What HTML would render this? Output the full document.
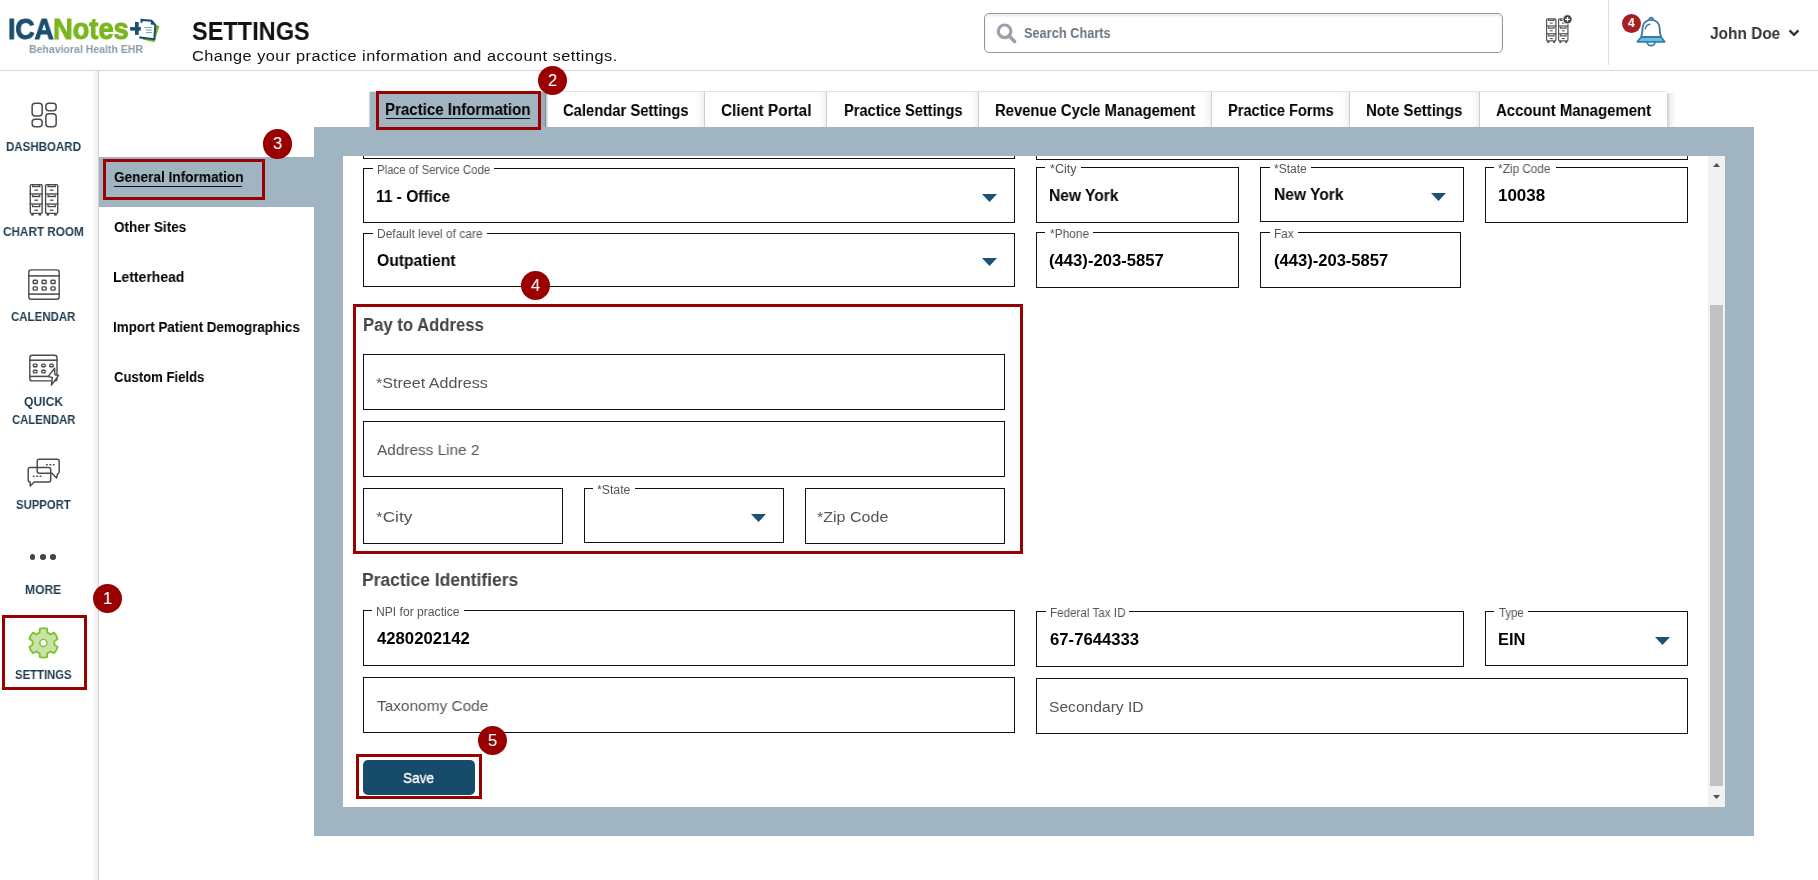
<!DOCTYPE html>
<html><head><meta charset="utf-8"><title>Settings</title>
<style>

html,body{margin:0;padding:0;}
body{width:1818px;height:880px;overflow:hidden;background:#fff;position:relative;font-family:"Liberation Sans",sans-serif;}
.t{position:absolute;white-space:nowrap;transform-origin:0 0;will-change:transform;}
.badge{position:absolute;border-radius:50%;background:#990000;color:#fff;text-align:center;font-size:16.5px;font-family:"Liberation Sans",sans-serif;}
.tab{position:absolute;top:92px;height:35px;box-shadow:inset -1.5px 0 0 rgba(0,0,0,0.28), inset -9px 0 8px -6px rgba(0,0,0,0.10);}

</style></head><body>
<div style="position:absolute;left:0px;top:70px;width:1818px;height:1px;background:#d6d6d6;"></div>
<div style="position:absolute;left:984px;top:13px;width:519px;height:40px;box-sizing:border-box;border:1px solid #8e98a0;border-radius:5px;box-shadow:inset 0 2px 3px rgba(0,0,0,0.08);"></div>
<svg style="position:absolute;left:995px;top:22px" width="24" height="24"><circle cx="9.6" cy="9.3" r="6.3" fill="none" stroke="#99a2aa" stroke-width="3.2"/><line x1="14.2" y1="14" x2="19.6" y2="19.5" stroke="#99a2aa" stroke-width="3.6" stroke-linecap="round"/></svg>
<div style="position:absolute;left:1608px;top:0px;width:1px;height:65px;background:#dedede;"></div>
<svg style="position:absolute;left:1540px;top:10px" width="40" height="40"><rect x="6.6" y="8.799999999999999" width="9.3" height="22.1" rx="1" fill="#fff" stroke="#555" stroke-width="1.2"/><line x1="6" y1="15.97" x2="16.5" y2="15.97" stroke="#555" stroke-width="1.2"/><line x1="6" y1="23.73" x2="16.5" y2="23.73" stroke="#555" stroke-width="1.2"/><path d="M8.52,8.80 v1.49 h5.46 v-1.49" fill="none" stroke="#555" stroke-width="1.2"/><line x1="9.78" y1="13.02" x2="12.72" y2="13.02" stroke="#555" stroke-width="1.08"/><path d="M8.52,16.57 v1.49 h5.46 v-1.49" fill="none" stroke="#555" stroke-width="1.2"/><line x1="9.78" y1="20.78" x2="12.72" y2="20.78" stroke="#555" stroke-width="1.08"/><path d="M8.52,24.33 v1.49 h5.46 v-1.49" fill="none" stroke="#555" stroke-width="1.2"/><line x1="9.78" y1="28.55" x2="12.72" y2="28.55" stroke="#555" stroke-width="1.08"/><rect x="7.26" y="31.00" width="2.10" height="2" fill="#555"/><rect x="13.14" y="31.00" width="2.10" height="2" fill="#555"/><rect x="18.6" y="8.799999999999999" width="9.3" height="22.1" rx="1" fill="#fff" stroke="#555" stroke-width="1.2"/><line x1="18" y1="15.97" x2="28.5" y2="15.97" stroke="#555" stroke-width="1.2"/><line x1="18" y1="23.73" x2="28.5" y2="23.73" stroke="#555" stroke-width="1.2"/><path d="M20.52,8.80 v1.49 h5.46 v-1.49" fill="none" stroke="#555" stroke-width="1.2"/><line x1="21.78" y1="13.02" x2="24.72" y2="13.02" stroke="#555" stroke-width="1.08"/><path d="M20.52,16.57 v1.49 h5.46 v-1.49" fill="none" stroke="#555" stroke-width="1.2"/><line x1="21.78" y1="20.78" x2="24.72" y2="20.78" stroke="#555" stroke-width="1.08"/><path d="M20.52,24.33 v1.49 h5.46 v-1.49" fill="none" stroke="#555" stroke-width="1.2"/><line x1="21.78" y1="28.55" x2="24.72" y2="28.55" stroke="#555" stroke-width="1.08"/><rect x="19.26" y="31.00" width="2.10" height="2" fill="#555"/><rect x="25.14" y="31.00" width="2.10" height="2" fill="#555"/><circle cx="27.5" cy="9.3" r="4.6" fill="#444" stroke="#fff" stroke-width="0.8"/><path d="M25.2,9.3 h4.6 M27.5,7 v4.6" stroke="#fff" stroke-width="1.3"/></svg>
<svg style="position:absolute;left:1634px;top:15px" width="34" height="34"><path d="M15.2,4.6 a1.9,1.9 0 0 1 3.8,0" fill="none" stroke="#3d7ba6" stroke-width="1.8"/><path d="M13.2,27 a3.9,3.6 0 0 0 7.8,0" fill="none" stroke="#3d7ba6" stroke-width="1.8"/><path d="M7.2,22 C8,19 8.6,15.5 8.6,12.8 C8.6,8.2 12.4,4.9 17.1,4.9 C21.8,4.9 25.6,8.2 25.6,12.8 C25.6,15.5 26.2,19 27,22 Z" fill="#fff" stroke="#3d7ba6" stroke-width="1.9" stroke-linejoin="round"/><path d="M7,22.2 L27.2,22.2 L30.6,26.8 L3.4,26.8 Z" fill="#5ec2ec" stroke="#3d7ba6" stroke-width="1.8" stroke-linejoin="round"/><path d="M11.3,14 C11.7,11.3 13.3,9.7 15.8,9.3" fill="none" stroke="#3d7ba6" stroke-width="1.4" stroke-linecap="round"/></svg>
<div class="badge" style="left:1621.8px;top:14px;width:19px;height:19px;line-height:19px;font-size:12px;font-weight:700;background:#a51e22;">4</div>
<svg style="position:absolute;left:1786px;top:26px" width="16" height="14"><path d="M3.6,4.3 L8,8.8 L12.4,4.3" fill="none" stroke="#333" stroke-width="2.4"/></svg>
<svg style="position:absolute;left:125px;top:12px" width="40" height="36"><rect x="5.1" y="15.1" width="12.9" height="3.5" fill="#1b4f6f"/><rect x="10" y="10" width="3.7" height="12.9" fill="#1b4f6f"/><polygon points="31.1,13.1 34.4,14.1 29.4,30.3 17.6,27.4" fill="#7ab52b"/><polygon points="16.4,7.9 26.6,8.8 30.3,13 29.3,27.2 15.3,25.6" fill="#fff"/><path d="M16.6,10.8 L16.4,7.9 L26.6,8.8 L30.3,13 L29.3,27.2 L15.3,25.6 L15.4,24.3" fill="none" stroke="#1b4f6f" stroke-width="2" stroke-linejoin="miter"/><polygon points="25.8,8.6 30.5,13 25.8,12.5" fill="#1b4f6f"/><path d="M19.6,15.5 H26.8 M21,18 H26.8 M21,20.6 H26.8" stroke="#7f96ad" stroke-width="1"/></svg>
<div style="position:absolute;left:92px;top:71px;width:6px;height:809px;background:linear-gradient(to right,rgba(0,0,0,0),rgba(0,0,0,0.07));"></div>
<div style="position:absolute;left:98px;top:71px;width:1px;height:809px;background:#cfcfcf;"></div>
<svg style="position:absolute;left:28px;top:99px" width="32" height="32" fill="none" stroke="#4a4a4a" stroke-width="1.5"><rect x="4.15" y="4.15" width="10.0" height="12.9" rx="3"/><rect x="17.85" y="4.15" width="10.3" height="7.6" rx="3"/><rect x="4.15" y="20.25" width="10.0" height="7.6" rx="3"/><rect x="17.85" y="14.85" width="10.3" height="13.0" rx="3"/></svg>
<svg style="position:absolute;left:26px;top:180px" width="36" height="40"><rect x="4.3" y="4.6" width="11.799999999999999" height="28.8" rx="1" fill="#fff" stroke="#4a4a4a" stroke-width="1.4"/><line x1="3.6" y1="13.97" x2="16.8" y2="13.97" stroke="#4a4a4a" stroke-width="1.4"/><line x1="3.6" y1="24.03" x2="16.8" y2="24.03" stroke="#4a4a4a" stroke-width="1.4"/><path d="M6.77,4.60 v1.90 h6.86 v-1.90" fill="none" stroke="#4a4a4a" stroke-width="1.4"/><line x1="8.35" y1="10.14" x2="12.05" y2="10.14" stroke="#4a4a4a" stroke-width="1.26"/><path d="M6.77,14.67 v1.90 h6.86 v-1.90" fill="none" stroke="#4a4a4a" stroke-width="1.4"/><line x1="8.35" y1="20.21" x2="12.05" y2="20.21" stroke="#4a4a4a" stroke-width="1.26"/><path d="M6.77,24.73 v1.90 h6.86 v-1.90" fill="none" stroke="#4a4a4a" stroke-width="1.4"/><line x1="8.35" y1="30.27" x2="12.05" y2="30.27" stroke="#4a4a4a" stroke-width="1.26"/><rect x="5.18" y="33.60" width="2.64" height="2" fill="#4a4a4a"/><rect x="12.58" y="33.60" width="2.64" height="2" fill="#4a4a4a"/><rect x="19.599999999999998" y="4.6" width="12.1" height="28.8" rx="1" fill="#fff" stroke="#4a4a4a" stroke-width="1.4"/><line x1="18.9" y1="13.97" x2="32.4" y2="13.97" stroke="#4a4a4a" stroke-width="1.4"/><line x1="18.9" y1="24.03" x2="32.4" y2="24.03" stroke="#4a4a4a" stroke-width="1.4"/><path d="M22.14,4.60 v1.90 h7.02 v-1.90" fill="none" stroke="#4a4a4a" stroke-width="1.4"/><line x1="23.76" y1="10.14" x2="27.54" y2="10.14" stroke="#4a4a4a" stroke-width="1.26"/><path d="M22.14,14.67 v1.90 h7.02 v-1.90" fill="none" stroke="#4a4a4a" stroke-width="1.4"/><line x1="23.76" y1="20.21" x2="27.54" y2="20.21" stroke="#4a4a4a" stroke-width="1.26"/><path d="M22.14,24.73 v1.90 h7.02 v-1.90" fill="none" stroke="#4a4a4a" stroke-width="1.4"/><line x1="23.76" y1="30.27" x2="27.54" y2="30.27" stroke="#4a4a4a" stroke-width="1.26"/><rect x="20.52" y="33.60" width="2.70" height="2" fill="#4a4a4a"/><rect x="28.08" y="33.60" width="2.70" height="2" fill="#4a4a4a"/></svg>
<svg style="position:absolute;left:26px;top:266px" width="36" height="36"><rect x="2.8" y="3.9000000000000004" width="30.400000000000002" height="29.3" rx="2.5" fill="#fff" stroke="#4a4a4a" stroke-width="1.4"/><line x1="2.1" y1="9.899999999999977" x2="33.9" y2="9.899999999999977" stroke="#4a4a4a" stroke-width="1.54"/><line x1="2.1" y1="28.100000000000023" x2="33.9" y2="28.100000000000023" stroke="#4a4a4a" stroke-width="1.54"/><rect x="7.2" y="14.300000000000022" width="4.1" height="3.199999999999966" rx="0.8" fill="none" stroke="#4a4a4a" stroke-width="1.4"/><rect x="16.099999999999998" y="14.300000000000022" width="4.1" height="3.199999999999966" rx="0.8" fill="none" stroke="#4a4a4a" stroke-width="1.4"/><rect x="24.999999999999996" y="14.300000000000022" width="4.1" height="3.199999999999966" rx="0.8" fill="none" stroke="#4a4a4a" stroke-width="1.4"/><rect x="7.2" y="20.899999999999988" width="4.1" height="3.200000000000023" rx="0.8" fill="none" stroke="#4a4a4a" stroke-width="1.4"/><rect x="16.099999999999998" y="20.899999999999988" width="4.1" height="3.200000000000023" rx="0.8" fill="none" stroke="#4a4a4a" stroke-width="1.4"/><rect x="24.999999999999996" y="20.899999999999988" width="4.1" height="3.200000000000023" rx="0.8" fill="none" stroke="#4a4a4a" stroke-width="1.4"/></svg>
<svg style="position:absolute;left:26px;top:350px" width="36" height="40"><rect x="3.8" y="5.2" width="27.200000000000003" height="25.700000000000003" rx="2.5" fill="#fff" stroke="#4a4a4a" stroke-width="1.4"/><line x1="3.1" y1="10.2" x2="31.700000000000003" y2="10.2" stroke="#4a4a4a" stroke-width="1.54"/><line x1="3.1" y1="26.4" x2="31.700000000000003" y2="26.4" stroke="#4a4a4a" stroke-width="1.54"/><rect x="7.400000000000003" y="14.099999999999977" width="3.6" height="2.700000000000023" rx="0.8" fill="none" stroke="#4a4a4a" stroke-width="1.4"/><rect x="15.8" y="14.099999999999977" width="3.3999999999999972" height="2.700000000000023" rx="0.8" fill="none" stroke="#4a4a4a" stroke-width="1.4"/><rect x="23.8" y="14.099999999999977" width="3.3999999999999972" height="2.700000000000023" rx="0.8" fill="none" stroke="#4a4a4a" stroke-width="1.4"/><rect x="7.400000000000003" y="20.2" width="3.6" height="2.700000000000023" rx="0.8" fill="none" stroke="#4a4a4a" stroke-width="1.4"/><rect x="15.8" y="20.2" width="3.3999999999999972" height="2.700000000000023" rx="0.8" fill="none" stroke="#4a4a4a" stroke-width="1.4"/><polygon points="28.6,18.2 22.2,26.6 26.4,27.4 25.4,35.2 32.6,25.4 28.9,24.7" fill="#fff" stroke="#4a4a4a" stroke-width="1.4" stroke-linejoin="round"/></svg>
<svg style="position:absolute;left:24px;top:455px" width="40" height="36" fill="none" stroke="#4a4a4a" stroke-width="1.45" stroke-linejoin="round"><path d="M15.2,4.2 H33.2 a2,2 0 0 1 2,2 V17 a2,2 0 0 1 -1.5,1.8 L32.5,23 L28,18.3 H15.2 a2,2 0 0 1 -2,-2 V6.2 a2,2 0 0 1 2,-2 Z"/><path d="M6.2,12.5 H24.7 a2,2 0 0 1 2,2 V25 a2,2 0 0 1 -2,2 H10.2 L6.2,31 V27 a2,2 0 0 1 -2,-2 V14.5 a2,2 0 0 1 2,-2 Z"/><path d="M22.6,9.8 h0.6 M26,9.8 h0.6 M29.4,9.8 h0.6" stroke-width="1.6" stroke-linecap="round"/><path d="M9.4,21.3 h0.6 M12.8,21.3 h0.6 M16.2,21.3 h0.6" stroke-width="1.6" stroke-linecap="round"/></svg>
<div style="position:absolute;left:29.90px;top:554.10px;width:5.6px;height:5.6px;border-radius:50%;background:#444;"></div>
<div style="position:absolute;left:40.30px;top:554.10px;width:5.6px;height:5.6px;border-radius:50%;background:#444;"></div>
<div style="position:absolute;left:50.30px;top:554.10px;width:5.6px;height:5.6px;border-radius:50%;background:#444;"></div>
<svg style="position:absolute;left:25px;top:625px" width="38" height="38"><path d="M14.56,7.63 L14.94,3.64 A14.7,14.7 0 0 1 22.06,3.64 L22.44,7.63 A11.0,11.0 0 0 1 25.42,9.35 L29.07,7.69 A14.7,14.7 0 0 1 32.63,13.85 L29.36,16.18 A11.0,11.0 0 0 1 29.36,19.62 L32.63,21.95 A14.7,14.7 0 0 1 29.07,28.11 L25.42,26.45 A11.0,11.0 0 0 1 22.44,28.17 L22.06,32.16 A14.7,14.7 0 0 1 14.94,32.16 L14.56,28.17 A11.0,11.0 0 0 1 11.58,26.45 L7.93,28.11 A14.7,14.7 0 0 1 4.37,21.95 L7.64,19.62 A11.0,11.0 0 0 1 7.64,16.18 L4.37,13.85 A14.7,14.7 0 0 1 7.93,7.69 L11.58,9.35 A11.0,11.0 0 0 1 14.56,7.63 Z" fill="#c9e3a6" stroke="#7cc22b" stroke-width="1.8" stroke-linejoin="round"/><circle cx="18.4" cy="17.9" r="3.6" fill="#fff" stroke="#79bf2a" stroke-width="1.3"/></svg>
<div style="position:absolute;left:2px;top:615px;width:85px;height:75px;box-sizing:border-box;border:3px solid #990000;"></div>
<div class="badge" style="left:92.85px;top:583.75px;width:29.5px;height:29.5px;line-height:29.5px;">1</div>
<div style="position:absolute;left:99px;top:157px;width:215px;height:50px;background:#a0b4c1;"></div>
<div style="position:absolute;left:103px;top:159px;width:162px;height:41px;box-sizing:border-box;border:3px solid #990000;"></div>
<div style="position:absolute;left:114.2px;top:186px;width:128.1px;height:1.2px;background:#111;"></div>
<div class="badge" style="left:262.75px;top:129.45px;width:29.5px;height:29.5px;line-height:29.5px;">3</div>
<div style="position:absolute;left:314px;top:127px;width:1440px;height:709px;background:#a0b4c1;"></div>
<div style="position:absolute;left:370px;top:91px;width:1297px;height:1px;background:#e2e2e2;"></div>
<div class="tab" style="left:370px;width:176.6px;background:#a0b4c1;"></div>
<div class="tab" style="left:546px;width:159.6px;background:#fff;"></div>
<div class="tab" style="left:705px;width:122.6px;background:#fff;"></div>
<div class="tab" style="left:827px;width:152.6px;background:#fff;"></div>
<div class="tab" style="left:979px;width:233.6px;background:#fff;"></div>
<div class="tab" style="left:1212px;width:138.6px;background:#fff;"></div>
<div class="tab" style="left:1350px;width:130.6px;background:#fff;"></div>
<div class="tab" style="left:1480px;width:187.6px;background:#fff;box-shadow:none;"></div>
<div style="position:absolute;left:386px;top:118px;width:144px;height:1.2px;background:#111;"></div>
<div style="position:absolute;left:1667px;top:93px;width:9px;height:34px;background:linear-gradient(to right,rgba(0,0,0,0.2),rgba(0,0,0,0.06) 40%,rgba(0,0,0,0));"></div>
<div style="position:absolute;left:368px;top:92px;width:2px;height:35px;background:linear-gradient(to left,rgba(0,0,0,0.18),rgba(0,0,0,0));"></div>
<div style="position:absolute;left:546px;top:92px;width:2px;height:35px;background:linear-gradient(to right,rgba(0,0,0,0.25),rgba(0,0,0,0.05));"></div>
<div style="position:absolute;left:376px;top:91px;width:165px;height:39px;box-sizing:border-box;border:3px solid #990000;"></div>
<div class="badge" style="left:537.95px;top:65.65px;width:29.5px;height:29.5px;line-height:29.5px;">2</div>
<div style="position:absolute;left:343px;top:156px;width:1382px;height:651px;background:#fff;"></div>
<div style="position:absolute;left:1708px;top:156px;width:17px;height:651px;background:#f1f1f1;"></div>
<div style="position:absolute;left:1710px;top:305px;width:13px;height:481px;background:#c1c1c1;"></div>
<svg style="position:absolute;left:1713px;top:163px" width="7" height="4"><polygon points="0,4 7,4 3.5,0" fill="#505050"/></svg>
<svg style="position:absolute;left:1713px;top:795px" width="7" height="4"><polygon points="0,0 7,0 3.5,4" fill="#505050"/></svg>
<div style="position:absolute;left:363px;top:156px;width:652px;height:3px;box-sizing:border-box;border:1px solid #111;border-top:none;"></div>
<div style="position:absolute;left:1036px;top:156px;width:652px;height:4px;box-sizing:border-box;border:1px solid #111;border-top:none;"></div>
<div style="position:absolute;left:363px;top:168px;width:652px;height:55px;box-sizing:border-box;border:1px solid #111;background:#fff;"></div>
<div style="position:absolute;left:372.5px;top:167px;width:121.60000000000002px;height:4px;background:#fff;"></div>
<div style="position:absolute;left:1036px;top:167px;width:203px;height:56px;box-sizing:border-box;border:1px solid #111;background:#fff;"></div>
<div style="position:absolute;left:1045.2px;top:166px;width:36.0px;height:4px;background:#fff;"></div>
<div style="position:absolute;left:1260px;top:167px;width:204px;height:55px;box-sizing:border-box;border:1px solid #111;background:#fff;"></div>
<div style="position:absolute;left:1269.6px;top:166px;width:41.700000000000045px;height:4px;background:#fff;"></div>
<div style="position:absolute;left:1485px;top:167px;width:203px;height:56px;box-sizing:border-box;border:1px solid #111;background:#fff;"></div>
<div style="position:absolute;left:1494px;top:166px;width:61.5px;height:4px;background:#fff;"></div>
<div style="position:absolute;left:363px;top:233px;width:652px;height:54px;box-sizing:border-box;border:1px solid #111;background:#fff;"></div>
<div style="position:absolute;left:372.5px;top:232px;width:114.0px;height:4px;background:#fff;"></div>
<div style="position:absolute;left:1036px;top:232px;width:203px;height:56px;box-sizing:border-box;border:1px solid #111;background:#fff;"></div>
<div style="position:absolute;left:1045.2px;top:231px;width:47.799999999999955px;height:4px;background:#fff;"></div>
<div style="position:absolute;left:1260px;top:232px;width:201px;height:56px;box-sizing:border-box;border:1px solid #111;background:#fff;"></div>
<div style="position:absolute;left:1269.6px;top:231px;width:28.40000000000009px;height:4px;background:#fff;"></div>
<svg style="position:absolute;left:982px;top:194px" width="15" height="8"><polygon points="0,0 15,0 7.5,8" fill="#1d5273"/></svg>
<svg style="position:absolute;left:982px;top:258px" width="15" height="8"><polygon points="0,0 15,0 7.5,8" fill="#1d5273"/></svg>
<svg style="position:absolute;left:1431px;top:193px" width="15" height="8"><polygon points="0,0 15,0 7.5,8" fill="#1d5273"/></svg>
<div style="position:absolute;left:353px;top:304px;width:670px;height:250px;box-sizing:border-box;border:3px solid #990000;"></div>
<div style="position:absolute;left:363px;top:354px;width:642px;height:56px;box-sizing:border-box;border:1px solid #111;background:#fff;"></div>
<div style="position:absolute;left:363px;top:421px;width:642px;height:56px;box-sizing:border-box;border:1px solid #111;background:#fff;"></div>
<div style="position:absolute;left:363px;top:488px;width:200px;height:56px;box-sizing:border-box;border:1px solid #111;background:#fff;"></div>
<div style="position:absolute;left:584px;top:488px;width:200px;height:55px;box-sizing:border-box;border:1px solid #111;background:#fff;"></div>
<div style="position:absolute;left:592.6px;top:487px;width:42.19999999999993px;height:4px;background:#fff;"></div>
<div style="position:absolute;left:805px;top:488px;width:200px;height:56px;box-sizing:border-box;border:1px solid #111;background:#fff;"></div>
<svg style="position:absolute;left:751px;top:514px" width="15" height="8"><polygon points="0,0 15,0 7.5,8" fill="#1d5273"/></svg>
<div style="position:absolute;left:363px;top:610px;width:652px;height:56px;box-sizing:border-box;border:1px solid #111;background:#fff;"></div>
<div style="position:absolute;left:372.4px;top:609px;width:91.80000000000001px;height:4px;background:#fff;"></div>
<div style="position:absolute;left:1036px;top:611px;width:428px;height:56px;box-sizing:border-box;border:1px solid #111;background:#fff;"></div>
<div style="position:absolute;left:1045.6px;top:610px;width:83.70000000000005px;height:4px;background:#fff;"></div>
<div style="position:absolute;left:1485px;top:611px;width:203px;height:55px;box-sizing:border-box;border:1px solid #111;background:#fff;"></div>
<div style="position:absolute;left:1494.4px;top:610px;width:33.899999999999864px;height:4px;background:#fff;"></div>
<svg style="position:absolute;left:1655px;top:637px" width="15" height="8"><polygon points="0,0 15,0 7.5,8" fill="#1d5273"/></svg>
<div style="position:absolute;left:363px;top:677px;width:652px;height:56px;box-sizing:border-box;border:1px solid #111;background:#fff;"></div>
<div style="position:absolute;left:1036px;top:678px;width:652px;height:56px;box-sizing:border-box;border:1px solid #111;background:#fff;"></div>
<div class="badge" style="left:520.75px;top:270.75px;width:29.5px;height:29.5px;line-height:29.5px;">4</div>
<div style="position:absolute;left:356px;top:754px;width:126px;height:45px;box-sizing:border-box;border:3px solid #990000;"></div>
<div style="position:absolute;left:363px;top:760px;width:112px;height:35px;border-radius:5px;background:#164b69;"></div>
<div class="badge" style="left:477.75px;top:725.65px;width:29.5px;height:29.5px;line-height:29.5px;">5</div>
<div class="t" style="left:192.32px;top:19.40px;font-size:25px;line-height:25px;font-weight:700;color:#111;transform:scaleX(0.9414);">SETTINGS</div>
<div class="t" style="left:192.40px;top:47.69px;font-size:15.4px;line-height:15.4px;font-weight:400;color:#111;transform:scaleX(1.0600);letter-spacing:0.468px;">Change your practice information and account settings.</div>
<div class="t" style="left:1024.07px;top:26.00px;font-size:14.4px;line-height:14.4px;font-weight:700;color:#6b7680;transform:scaleX(0.8880);">Search Charts</div>
<div class="t" style="left:1709.91px;top:25.00px;font-size:16.3px;line-height:16.3px;font-weight:700;color:#333;transform:scaleX(0.9471);">John Doe</div>
<div class="t" style="left:7.90px;top:14.00px;font-size:29.5px;line-height:29.5px;font-weight:700;color:#1b4f6f;transform:scaleX(0.8996);-webkit-text-stroke:1px #1b4f6f;">ICA</div>
<div class="t" style="left:53.00px;top:14.00px;font-size:29.5px;line-height:29.5px;font-weight:700;color:#7ab51d;transform:scaleX(0.9236);-webkit-text-stroke:1px #7ab51d;">Notes</div>
<div class="t" style="left:28.50px;top:44.04px;font-size:11px;line-height:11px;font-weight:700;color:#8d9ba6;transform:scaleX(0.9565);">Behavioral Health EHR</div>
<div class="t" style="left:6.00px;top:140.82px;font-size:12.2px;line-height:12.2px;font-weight:700;color:#1e3c50;transform:scaleX(0.9464);">DASHBOARD</div>
<div class="t" style="left:3.15px;top:226.02px;font-size:12.2px;line-height:12.2px;font-weight:700;color:#1e3c50;transform:scaleX(0.9627);">CHART ROOM</div>
<div class="t" style="left:11.25px;top:311.02px;font-size:12.2px;line-height:12.2px;font-weight:700;color:#1e3c50;transform:scaleX(0.9425);">CALENDAR</div>
<div class="t" style="left:24.04px;top:395.82px;font-size:12.2px;line-height:12.2px;font-weight:700;color:#1e3c50;transform:scaleX(0.9925);">QUICK</div>
<div class="t" style="left:11.95px;top:413.72px;font-size:12.2px;line-height:12.2px;font-weight:700;color:#1e3c50;transform:scaleX(0.9278);">CALENDAR</div>
<div class="t" style="left:15.58px;top:499.02px;font-size:12.2px;line-height:12.2px;font-weight:700;color:#1e3c50;transform:scaleX(0.9273);">SUPPORT</div>
<div class="t" style="left:25.40px;top:584.02px;font-size:12.2px;line-height:12.2px;font-weight:700;color:#1e3c50;transform:scaleX(0.9852);">MORE</div>
<div class="t" style="left:14.98px;top:669.12px;font-size:12.2px;line-height:12.2px;font-weight:700;color:#1e3c50;transform:scaleX(0.9282);">SETTINGS</div>
<div class="t" style="left:113.53px;top:170.20px;font-size:14.5px;line-height:14.5px;font-weight:700;color:#000;transform:scaleX(0.9399);">General Information</div>
<div class="t" style="left:113.53px;top:219.90px;font-size:14.5px;line-height:14.5px;font-weight:700;color:#000;transform:scaleX(0.9345);">Other Sites</div>
<div class="t" style="left:113.20px;top:270.00px;font-size:14.5px;line-height:14.5px;font-weight:700;color:#000;transform:scaleX(0.9623);">Letterhead</div>
<div class="t" style="left:113.20px;top:320.10px;font-size:14.5px;line-height:14.5px;font-weight:700;color:#000;transform:scaleX(0.9237);">Import Patient Demographics</div>
<div class="t" style="left:113.53px;top:369.80px;font-size:14.5px;line-height:14.5px;font-weight:700;color:#000;transform:scaleX(0.9047);">Custom Fields</div>
<div class="t" style="left:385.47px;top:102.20px;font-size:16.8px;line-height:16.8px;font-weight:700;color:#000;transform:scaleX(0.8967);">Practice Information</div>
<div class="t" style="left:563.00px;top:103.10px;font-size:16.8px;line-height:16.8px;font-weight:700;color:#000;transform:scaleX(0.8807);">Calendar Settings</div>
<div class="t" style="left:721.00px;top:103.10px;font-size:16.8px;line-height:16.8px;font-weight:700;color:#000;transform:scaleX(0.9151);">Client Portal</div>
<div class="t" style="left:843.88px;top:103.10px;font-size:16.8px;line-height:16.8px;font-weight:700;color:#000;transform:scaleX(0.8709);">Practice Settings</div>
<div class="t" style="left:994.88px;top:103.10px;font-size:16.8px;line-height:16.8px;font-weight:700;color:#000;transform:scaleX(0.8837);">Revenue Cycle Management</div>
<div class="t" style="left:1227.88px;top:103.10px;font-size:16.8px;line-height:16.8px;font-weight:700;color:#000;transform:scaleX(0.8711);">Practice Forms</div>
<div class="t" style="left:1366.37px;top:103.10px;font-size:16.8px;line-height:16.8px;font-weight:700;color:#000;transform:scaleX(0.8920);">Note Settings</div>
<div class="t" style="left:1495.90px;top:103.10px;font-size:16.8px;line-height:16.8px;font-weight:700;color:#000;transform:scaleX(0.8894);">Account Management</div>
<div class="t" style="left:376.50px;top:164.10px;font-size:12px;line-height:12px;font-weight:400;color:#555;transform:scaleX(0.9537);">Place of Service Code</div>
<div class="t" style="left:376.50px;top:228.00px;font-size:12px;line-height:12px;font-weight:400;color:#555;transform:scaleX(0.9947);">Default level of care</div>
<div class="t" style="left:1049.64px;top:163.10px;font-size:12px;line-height:12px;font-weight:400;color:#555;transform:scaleX(1.0527);">*City</div>
<div class="t" style="left:1274.03px;top:163.10px;font-size:12px;line-height:12px;font-weight:400;color:#555;transform:scaleX(1.0035);">*State</div>
<div class="t" style="left:1498.43px;top:163.10px;font-size:12px;line-height:12px;font-weight:400;color:#555;transform:scaleX(0.9833);">*Zip Code</div>
<div class="t" style="left:1049.63px;top:227.80px;font-size:12px;line-height:12px;font-weight:400;color:#555;transform:scaleX(0.9920);">*Phone</div>
<div class="t" style="left:1273.60px;top:227.80px;font-size:12px;line-height:12px;font-weight:400;color:#555;transform:scaleX(0.9817);">Fax</div>
<div class="t" style="left:597.03px;top:484.20px;font-size:12px;line-height:12px;font-weight:400;color:#555;transform:scaleX(1.0225);">*State</div>
<div class="t" style="left:376.40px;top:606.00px;font-size:12px;line-height:12px;font-weight:400;color:#555;transform:scaleX(1.0098);">NPI for practice</div>
<div class="t" style="left:1049.60px;top:607.00px;font-size:12px;line-height:12px;font-weight:400;color:#555;transform:scaleX(0.9697);">Federal Tax ID</div>
<div class="t" style="left:1499.12px;top:607.20px;font-size:12px;line-height:12px;font-weight:400;color:#555;transform:scaleX(0.9491);">Type</div>
<div class="t" style="left:376.48px;top:189.00px;font-size:16px;line-height:16px;font-weight:700;color:#000;transform:scaleX(0.9690);">11 - Office</div>
<div class="t" style="left:376.50px;top:252.90px;font-size:16px;line-height:16px;font-weight:700;color:#000;transform:scaleX(0.9807);">Outpatient</div>
<div class="t" style="left:1049.11px;top:188.40px;font-size:16px;line-height:16px;font-weight:700;color:#000;transform:scaleX(0.9732);">New York</div>
<div class="t" style="left:1273.51px;top:187.40px;font-size:16px;line-height:16px;font-weight:700;color:#000;transform:scaleX(0.9736);">New York</div>
<div class="t" style="left:1497.91px;top:187.60px;font-size:16px;line-height:16px;font-weight:700;color:#000;transform:scaleX(1.0596);">10038</div>
<div class="t" style="left:1049.20px;top:252.50px;font-size:16px;line-height:16px;font-weight:700;color:#000;transform:scaleX(1.0408);">(443)-203-5857</div>
<div class="t" style="left:1273.60px;top:252.60px;font-size:16px;line-height:16px;font-weight:700;color:#000;transform:scaleX(1.0357);">(443)-203-5857</div>
<div class="t" style="left:377.13px;top:630.80px;font-size:16px;line-height:16px;font-weight:700;color:#000;transform:scaleX(1.0439);">4280202142</div>
<div class="t" style="left:1049.94px;top:631.70px;font-size:16px;line-height:16px;font-weight:700;color:#000;transform:scaleX(1.0434);">67-7644333</div>
<div class="t" style="left:1498.28px;top:632.00px;font-size:16px;line-height:16px;font-weight:700;color:#000;transform:scaleX(1.0221);">EIN</div>
<div class="t" style="left:376.23px;top:375.07px;font-size:15.5px;line-height:15.5px;font-weight:400;color:#555;transform:scaleX(1.0388);">*Street Address</div>
<div class="t" style="left:377.23px;top:442.07px;font-size:15.5px;line-height:15.5px;font-weight:400;color:#555;transform:scaleX(0.9913);">Address Line 2</div>
<div class="t" style="left:375.92px;top:508.57px;font-size:15.5px;line-height:15.5px;font-weight:400;color:#555;transform:scaleX(1.1092);">*City</div>
<div class="t" style="left:817.43px;top:508.57px;font-size:15.5px;line-height:15.5px;font-weight:400;color:#555;transform:scaleX(1.0351);">*Zip Code</div>
<div class="t" style="left:377.04px;top:697.97px;font-size:15.5px;line-height:15.5px;font-weight:400;color:#555;transform:scaleX(0.9933);">Taxonomy Code</div>
<div class="t" style="left:1049.33px;top:699.17px;font-size:15.5px;line-height:15.5px;font-weight:400;color:#555;transform:scaleX(1.0072);">Secondary ID</div>
<div class="t" style="left:362.54px;top:315.50px;font-size:18px;line-height:18px;font-weight:700;color:#444;transform:scaleX(0.9278);">Pay to Address</div>
<div class="t" style="left:362.28px;top:571.20px;font-size:18px;line-height:18px;font-weight:700;color:#444;transform:scaleX(0.9703);">Practice Identifiers</div>
<div class="t" style="left:403.19px;top:771.11px;font-size:14.5px;line-height:14.5px;font-weight:400;color:#fff;transform:scaleX(0.9347);-webkit-text-stroke:0.35px #fff;">Save</div>
</body></html>
